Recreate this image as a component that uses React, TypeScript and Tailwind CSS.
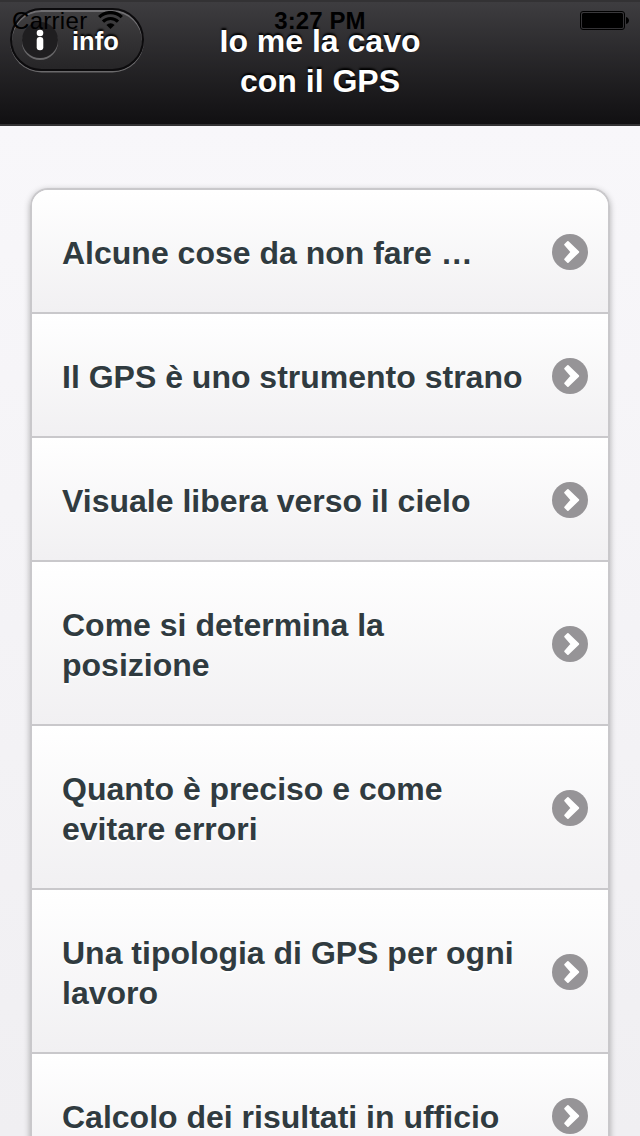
const topics = [
  'Alcune cose da non fare …',
  'Il GPS è uno strumento strano',
  'Visuale libera verso il cielo',
  'Come si determina la posizione',
  'Quanto è preciso e come evitare errori',
  'Una tipologia di GPS per ogni lavoro',
  'Calcolo dei risultati in ufficio',
];

function StatusBar() {
  return (
    <div className="pointer-events-none absolute inset-x-0 top-0 grid h-10 grid-cols-3 text-[24px] leading-10 text-black">
      <div className="flex items-start pl-[12px]">
        <span className="block h-10 w-[86px] leading-[42px] tracking-[0.3px]">Carrier</span>
        <svg width="25" height="18" viewBox="0 0 25 18" className="mt-[11px]" fill="none" stroke="#000" strokeWidth="3.2">
          <path d="M1.2 6.2a16 16 0 0 1 22.6 0" />
          <path d="M5 10.6a10.6 10.6 0 0 1 15 0" />
          <path d="M12.5 18l-4.1-4a5.8 5.8 0 0 1 8.2 0z" fill="#000" stroke="none" />
        </svg>
      </div>
      <span className="text-center text-[24px] font-bold leading-[42px] tracking-[0.1px]">3:27 PM</span>
      <div className="flex items-start justify-end pr-[11px] pt-[11px]">
        <svg width="49" height="19" viewBox="0 0 49 19">
          <rect x="0.5" y="0.5" width="44" height="18" rx="2.5" fill="none" stroke="#000" />
          <rect x="2" y="2" width="41" height="15" rx="1.5" fill="#000" />
          <path d="M46 6c4 1 4 6 0 7z" fill="#000" />
        </svg>
      </div>
    </div>
  );
}

function InfoButton() {
  return (
    <button className="mt-[8px] ml-[10px] flex h-[63px] w-[134px] items-center rounded-full border-2 border-[#0c0b0d] bg-gradient-to-b from-[#414042] to-[#262527] pl-[10px] shadow-[0_1.5px_0_#6a696b,inset_0_2px_0_#706f72]">
      <span className="flex size-9 items-center justify-center rounded-full bg-[#1f1e20] shadow-[0_2px_0_#69686a]">
        <svg width="8" height="22" viewBox="0 0 8 22" fill="#fff">
          <circle cx="4" cy="4" r="3.3" />
          <rect x="0.7" y="8" width="6.6" height="13.2" rx="3" />
        </svg>
      </span>
      <span className="ml-[14px] pt-[2px] text-[25.5px] font-bold leading-8 text-white [text-shadow:0_-2px_2px_#000]">info</span>
    </button>
  );
}

function ArrowIcon() {
  return (
    <svg width="36" height="36" viewBox="0 0 36 36" className="mt-[2px] shrink-0">
      <circle cx="18" cy="18" r="18" fill="#969497" />
      <path
        d="M13.1 10.7L15.9 7.9L26.3 18L15.9 28.1L13.1 25.3L19.4 18Z"
        fill="#fff"
        stroke="#fff"
        strokeWidth="1.8"
        strokeLinejoin="round"
      />
    </svg>
  );
}

export default function App() {
  return (
    <div className="h-[1136px] overflow-hidden bg-gradient-to-b from-[#f9f8fb] to-[#f0eff2] font-['Liberation_Sans',Arial,sans-serif]">
      <header className="relative grid h-[126px] grid-cols-[190px_260px_190px] items-start border-y-2 border-[#333234] bg-gradient-to-b from-[#3e3d40] to-[#111012]">
        <div className="-mt-[2px] flex">
          <InfoButton />
        </div>
        <h1 className="px-4 pt-[19px] text-center text-[32px] font-bold leading-10 text-white [text-shadow:0_-2px_2px_#000]">
          Io me la cavo con il GPS
        </h1>
        <div className="-mt-[2px] absolute inset-x-0 top-0">
          <StatusBar />
        </div>
      </header>
      <main className="px-[30px] pt-[62px]">
        <ul className="overflow-hidden rounded-t-[18px] border-x-2 border-t-2 border-[#c9c8cb] shadow-[0_2px_6px_rgba(0,0,0,0.3)]">
          {topics.map((topic) => (
            <li
              key={topic}
              className="flex items-center justify-between border-b-2 border-[#c9c8cb] bg-gradient-to-b from-white to-[#f1f0f2] pr-5 pl-[30px]"
            >
              <a className="block w-[471px] pt-[43px] pb-[39px] text-[32px] font-bold leading-10 text-[#303b40] [text-shadow:0_2px_0_#fff]">
                {topic}
              </a>
              <ArrowIcon />
            </li>
          ))}
        </ul>
      </main>
    </div>
  );
}
